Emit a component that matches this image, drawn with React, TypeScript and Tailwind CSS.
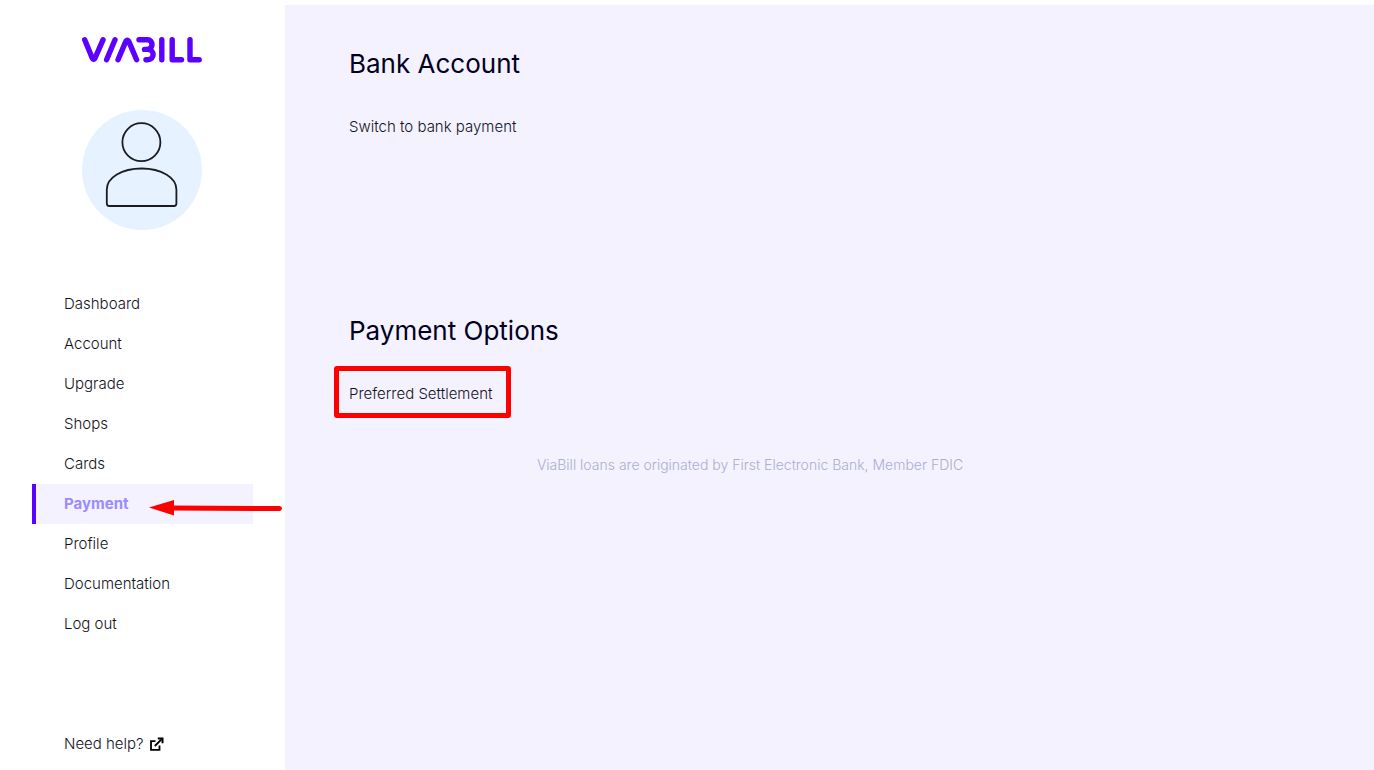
import clsx from 'clsx';

const navItems = [
    'Dashboard',
    'Account',
    'Upgrade',
    'Shops',
    'Cards',
    'Payment',
    'Profile',
    'Documentation',
    'Log out',
];

function Logo() {
    return (
        <svg
            className="w-[120px] h-[26px]"
            viewBox="0 0 120 26"
            fill="none"
            stroke="#5c00ff"
            strokeWidth="5.4"
            strokeLinecap="round"
            strokeLinejoin="round"
            role="img"
            aria-label="ViaBill"
        >
            <path d="M2.7 2.8 9.9 20.2Q11.6 24.4 13.4 20.2L21 2.8" />
            <path d="M33 2.8 24.6 22.8" />
            <path d="M36 22.8 43.4 5.4Q45.3 1.2 47.2 5.4L54.6 22.8" />
            <path d="M57 2.8H65.5C71.5 2.8 71.5 12 65.5 12.4H62.5M65.5 12.4C73 12.4 73 22.8 65.5 22.8H64" />
            <path d="M79.8 2.8V22.8" />
            <path d="M90.2 2.8V22.8H99.5" />
            <path d="M108 2.8V22.8H117.2" />
        </svg>
    );
}

function Avatar() {
    return (
        <div className="w-[120px] h-[120px] rounded-full bg-[#e6f2ff]">
            <svg viewBox="0 0 120 120" fill="none" stroke="#1b1c20" strokeWidth="1.8" aria-hidden="true">
                <circle cx="59.4" cy="32.2" r="19" />
                <path d="M24.8 79.5C24.8 67.5 40 58.5 59.6 58.5S94.4 67.5 94.4 79.5V93.5Q94.4 96 91.9 96H27.3Q24.8 96 24.8 93.5Z" />
            </svg>
        </div>
    );
}

function ExternalIcon() {
    return (
        <svg className="w-[14px] h-[14px]" viewBox="0 0 14 14" fill="none" stroke="#000" aria-hidden="true">
            <path d="M5.5 4.2H1V12.8H9.5V8.5" strokeWidth="1.8" />
            <path d="M4.8 9 11.5 2.3" strokeWidth="1.8" />
            <path d="M7.8 1.5H12.5V6.2" strokeWidth="2" />
        </svg>
    );
}

function Arrow() {
    return (
        <svg
            className="absolute left-[116px] top-[15px] w-[135px] h-[18px] pointer-events-none"
            viewBox="0 0 135 18"
            aria-hidden="true"
        >
            <path d="M22 9 131.5 9.5" stroke="#f00" strokeWidth="5" strokeLinecap="round" />
            <path d="M1 8.5 26 1V16.5Z" fill="#f00" />
        </svg>
    );
}

export default function App() {
    return (
        <div className="flex min-h-screen bg-white font-['Inter','Liberation_Sans',sans-serif] text-[15px] leading-6 font-light text-[#12121c]">
            {/* Sidebar */}
            <aside className="w-[285px] shrink-0 flex flex-col px-8 pb-[14px]">
                <div className="flex flex-col items-center pt-[37px] pr-0.5 gap-[47px]">
                    <Logo />
                    <Avatar />
                </div>

                <nav className="mt-[54px]">
                    <ul>
                        {navItems.map((item) => {
                            const active = item === 'Payment';
                            return (
                                <li key={item} className="relative">
                                    <a
                                        href="#"
                                        aria-current={active ? 'page' : undefined}
                                        className={clsx(
                                            'block border-l-4 pl-7 py-2',
                                            active
                                                ? 'border-[#5c00ff] bg-[#f4f2ff] font-bold text-[#9a8cff]'
                                                : 'border-transparent'
                                        )}
                                    >
                                        {item}
                                    </a>
                                    {active && <Arrow />}
                                </li>
                            );
                        })}
                    </ul>
                </nav>

                <a href="#" className="mt-auto flex items-center gap-1.5 pl-8">
                    Need help?
                    <ExternalIcon />
                </a>
            </aside>

            {/* Content */}
            <main className="flex-1 mt-[5px] bg-[#f4f2ff] px-16 pt-[39px]">
                <section className="h-[267px]">
                    <h1 className="text-[26px] leading-10 font-normal text-[#00001e]">Bank Account</h1>
                    <a href="#" className="inline-block mt-[31px]">
                        Switch to bank payment
                    </a>
                </section>

                <section>
                    <h2 className="text-[26px] leading-10 font-normal text-[#00001e]">Payment Options</h2>
                    <a href="#" className="relative inline-block mt-[31px]">
                        Preferred Settlement
                        <span className="absolute -left-[15px] -right-[19px] -top-4 -bottom-3 border-5 border-[#f00] rounded-[3px]" />
                    </a>
                </section>

                <footer className="mt-[47px] max-w-[802px] text-center text-sm leading-6 text-[#abaed0]">
                    ViaBill loans are originated by First Electronic Bank, Member FDIC
                </footer>
            </main>
        </div>
    );
}
